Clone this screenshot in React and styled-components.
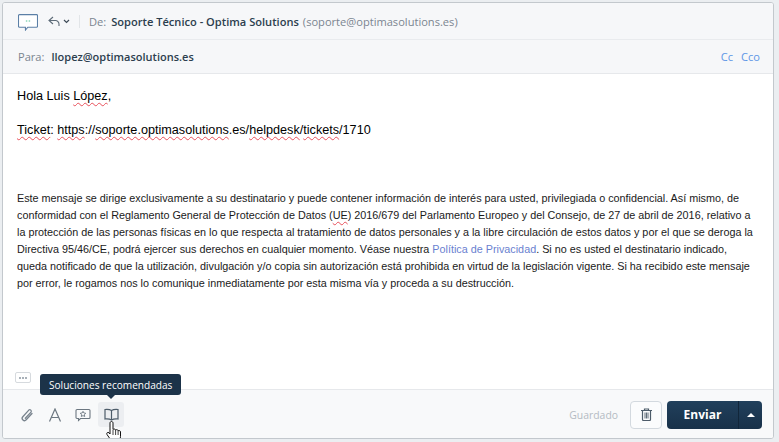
import React from 'react';
import styled, { createGlobalStyle } from 'styled-components';

const Global = createGlobalStyle`
  html, body { margin: 0; padding: 0; height: 100%; background: #ebeef1; overflow: hidden; }
  * { box-sizing: border-box; }
`

function App() {
  return (
    <>
      <Global />
      <Page>
        <Card>
          <FromRow>
            <ChatIcon viewBox="0 0 20 17" fill="none">
              <path d="M1.500.6h17a1 1 0 0 1 1 1v10.600a1 1 0 0 1-1 1H9.800L7.500 16l-.1-2.800H1.500a1 1 0 0 1-1-1V1.600a1 1 0 0 1 1-1z" fill="#fff" stroke="#5b7fa6" strokeWidth="1.100" />
              <circle cx="8.600" cy="7" r=".9" fill="#9fdcc4" />
              <circle cx="11.400" cy="7" r=".9" fill="#9fdcc4" />
            </ChatIcon>
            <ReplyIcon viewBox="0 0 12 11" fill="none">
              <path d="M5 1 1 4.500 5 8M1 4.500h6.500a3.500 3.500 0 0 1 3.500 3.500v2" stroke="#5d6b78" strokeWidth="1.100" />
            </ReplyIcon>
            <Caret viewBox="0 0 7 5" fill="none">
              <path d="M1 1l2.500 2.500L6 1" stroke="#3f4c59" strokeWidth="1.200" />
            </Caret>
            <Divider />
            <Label>De:</Label>
            <Sender>Soporte Técnico - Optima Solutions</Sender>
            <SenderMail>(soporte@optimasolutions.es)</SenderMail>
          </FromRow>
          <ToRow>
            <Label>Para:</Label>
            <Recipient>llopez@optimasolutions.es</Recipient>
            <CopyLinks>
              <CopyLink>Cc</CopyLink>
              <CopyLink>Cco</CopyLink>
            </CopyLinks>
          </ToRow>
          <Body>
            <Line>Hola Luis <Typo>López</Typo>,</Line>
            <Line><Typo>Ticket</Typo>: <Typo>https</Typo>://<Typo>soporte.optimasolutions</Typo>.es/<Typo>helpdesk</Typo>/<Typo>tickets</Typo>/1710</Line>
            <Legal>
              Este mensaje se dirige exclusivamente a su destinatario y puede contener información de interés para usted, privilegiada o confidencial. Así mismo, de<br />
              conformidad con el Reglamento General de Protección de Datos (<Typo>UE</Typo>) 2016/679 del Parlamento Europeo y del Consejo, de 27 de abril de 2016, relativo a<br />
              la protección de las personas físicas en lo que respecta al tratamiento de datos personales y a la libre circulación de estos datos y por el que se deroga la<br />
              Directiva 95/46/CE, podrá ejercer sus derechos en cualquier momento. Véase nuestra <PolicyLink>Política de Privacidad</PolicyLink>. Si no es usted el destinatario indicado,<br />
              queda notificado de que la utilización, divulgación y/o copia sin autorización está prohibida en virtud de la legislación vigente. Si ha recibido este mensaje<br />
              por error, le rogamos nos lo comunique inmediatamente por esta misma vía y proceda a su destrucción.
            </Legal>
            <MoreButton><MoreDot /><MoreDot /><MoreDot /></MoreButton>
          </Body>
          <Footer>
            <Tools>
              <Tool>
                <svg width="14" height="16" viewBox="0 0 14 16" fill="none">
                  <path d="M12 6.500 6.200 12.800a2.300 2.300 0 0 1-3.400-3.100l6-6.600a1.500 1.500 0 0 1 2.200 2L5.300 11.300" stroke="#78838d" strokeWidth="1.300" strokeLinecap="round" />
                </svg>
              </Tool>
              <Tool>
                <svg width="14" height="14" viewBox="0 0 14 14" fill="none">
                  <path d="M1.500 13.500 7 1l5.500 12.500M3.300 9.500h7.400" stroke="#6c7781" strokeWidth="1.200" />
                </svg>
              </Tool>
              <Tool>
                <svg width="16" height="14" viewBox="0 0 16 14" fill="none">
                  <path d="M2 1.500h12a1 1 0 0 1 1 1v7a1 1 0 0 1-1 1H5.500L3.500 12.500v-2H2a1 1 0 0 1-1-1v-7a1 1 0 0 1 1-1z" stroke="#6c7781" strokeWidth="1.100" />
                  <path d="m8 3.300.9 1.700 1.900.3-1.400 1.300.3 1.900L8 7.600l-1.700.9.300-1.900-1.400-1.300 1.900-.3z" stroke="#6c7781" strokeWidth=".9" />
                </svg>
              </Tool>
              <Tool $active>
                <svg width="15" height="14" viewBox="0 0 15 14" fill="none">
                  <path d="M7.500 2.500C6 1.500 3.500 1.300 1 1.500v9.500c2.500-.2 5 0 6.500 1 1.500-1 4-1.200 6.500-1V1.500c-2.500-.2-5 0-6.500 1zM7.500 2.500V12" stroke="#4d5c6a" strokeWidth="1.200" />
                </svg>
              </Tool>
              <Tooltip>Soluciones recomendadas</Tooltip>
              <HandCursor viewBox="0 0 17 24">
                <path d="M5.500.5c.9 0 1.500.7 1.500 1.600V8.500c.8-.8 2.300-.6 2.600.5.900-.7 2.300-.4 2.500.7 1-.5 2.400 0 2.400 1.300v4.500c0 1.800-.6 3-1.200 4.200V23H6v-2.500C4.500 18.500 2.700 16 1 13.500c-.9-1.400.8-2.800 2-1.700l1 1.200V2.100C4 1.200 4.600.5 5.500.5z" fill="#fff" stroke="#111" strokeWidth="1" strokeLinejoin="round" />
                <path d="M7 9v5M9.600 9v5M12.100 10v4" stroke="#111" strokeWidth=".8" />
              </HandCursor>
            </Tools>
            <Actions>
              <Saved>Guardado</Saved>
              <TrashButton>
                <svg width="11" height="13" viewBox="0 0 11 13" fill="none">
                  <path d="M0 2.500h11M3.500 2.500V1h4v1.500" stroke="#4d5c6a" strokeWidth="1.200" />
                  <path d="M1.500 3v8.500a1 1 0 0 0 1 1h6a1 1 0 0 0 1-1V3" stroke="#4d5c6a" strokeWidth="1.200" />
                  <path d="M4 4.500v6M5.500 4.500v6M7 4.500v6" stroke="#4d5c6a" strokeWidth=".9" />
                </svg>
              </TrashButton>
              <SendGroup>
                <SendButton>Enviar</SendButton>
                <SendMenu><UpArrow /></SendMenu>
              </SendGroup>
            </Actions>
          </Footer>
        </Card>
      </Page>
    </>
  )
}

const Page = styled.div`
  padding: 2px 5px 3px 2px;
  height: 442px;
  width: 779px;
`
const Card = styled.div`
  height: 437px;
  background: #fff;
  border: 1px solid #c3c8cd;
  border-radius: 3px;
  display: flex;
  flex-direction: column;
  overflow: hidden;
`
const FromRow = styled.div`
  height: 37px;
  flex: none;
  background: #f6f7f9;
  border-bottom: 1px solid #e9ebee;
  display: flex;
  align-items: center;
  padding-left: 15px;
  font-family: "Open Sans", "Noto Sans", sans-serif;
  font-size: 11.1px;
`
const ChatIcon = styled.svg`
  width: 20px;
  height: 17px;
  margin-top: 2px;
`
const ReplyIcon = styled.svg`
  width: 12px;
  height: 11px;
  margin-left: 10px;
`
const Caret = styled.svg`
  width: 7px;
  height: 5px;
  margin-left: 3px;
`
const Divider = styled.span`
  width: 1px;
  height: 13px;
  background: #e2e5e8;
  margin: 0 9px;
`
const Label = styled.span`
  color: #7b8590;
  font-size: 11.1px;
  font-family: "Open Sans", "Noto Sans", sans-serif;
`
const Sender = styled.span`
  color: #2c3e4e;
  font-weight: 600;
  margin-left: 5px;
`
const SenderMail = styled.span`
  color: #7b8590;
  margin-left: 4px;
`
const ToRow = styled.div`
  height: 34px;
  flex: none;
  background: #f6f7f9;
  border-bottom: 1px solid #e6e8eb;
  display: flex;
  align-items: center;
  padding: 0 13px 0 15px;
  font-family: "Open Sans", "Noto Sans", sans-serif;
`
const Recipient = styled.span`
  color: #2c3e4e;
  font-size: 11px;
  font-weight: 600;
  margin-left: 7px;
`
const CopyLinks = styled.div`
  margin-left: auto;
  display: flex;
  gap: 8px;
`
const CopyLink = styled.span`
  color: #5e96e6;
  font-size: 11.1px;
`
const Body = styled.div`
  flex: 1;
  position: relative;
  padding: 14px 15px 0 14px;
  font-family: "Liberation Sans", Arial, sans-serif;
  color: #000;
`
const Line = styled.p`
  margin: 0 0 17px;
  font-size: 12.65px;
  line-height: 17px;
`
const Typo = styled.span`
  text-decoration: underline wavy #e8505a 1px;
  text-underline-offset: 2px;
  text-decoration-skip-ink: none;
`
const Legal = styled.p`
  margin: 51px 0 0;
  font-size: 10.8px;
  line-height: 17px;
  color: #1a1a1a;
  white-space: nowrap;
`
const PolicyLink = styled.span`
  color: #6a7fd0;
`
const MoreButton = styled.div`
  position: absolute;
  left: 12px;
  bottom: 6px;
  width: 16px;
  height: 11px;
  border: 1px solid #d6dade;
  border-radius: 2px;
  display: flex;
  align-items: center;
  justify-content: center;
  gap: 1px;
`
const MoreDot = styled.span`
  width: 2px;
  height: 2px;
  background: #a9b1b9;
`
const Footer = styled.div`
  height: 49px;
  flex: none;
  background: #f8f9fa;
  border-top: 1px solid #e6e8eb;
  display: flex;
  align-items: center;
  justify-content: space-between;
  padding: 1px 11px 0 11px;
`
const Tools = styled.div`
  position: relative;
  display: flex;
  align-items: center;
  gap: 2px;
`
const Tool = styled.span`
  width: 26px;
  height: 25px;
  display: flex;
  align-items: center;
  justify-content: center;
  border-radius: 3px;
  background: ${p => (p.$active ? '#eceef1' : 'transparent')};
`
const Tooltip = styled.div`
  position: absolute;
  left: 26px;
  top: -28px;
  height: 21px;
  padding: 0 9px;
  display: flex;
  align-items: center;
  background: #1c3349;
  color: #fff;
  border-radius: 3px;
  font-family: "Open Sans", "Noto Sans", sans-serif;
  font-size: 10.1px;
  white-space: nowrap;
  &::after {
    content: "";
    position: absolute;
    left: 66px;
    bottom: -4px;
    border-left: 5px solid transparent;
    border-right: 5px solid transparent;
    border-top: 5px solid #1c3349;
  }
`
const HandCursor = styled.svg`
  position: absolute;
  left: 92px;
  top: 19px;
  width: 17px;
  height: 24px;
`
const Actions = styled.div`
  display: flex;
  align-items: center;
`
const Saved = styled.span`
  color: #b4bbc3;
  font-family: "Open Sans", "Noto Sans", sans-serif;
  font-size: 10.4px;
  margin-right: 12px;
`
const TrashButton = styled.button`
  width: 32px;
  height: 28px;
  padding: 0;
  display: flex;
  align-items: center;
  justify-content: center;
  background: #fbfcfd;
  border: 1px solid #d3d9df;
  border-radius: 4px;
  margin-right: 5px;
`
const SendGroup = styled.div`
  display: flex;
  height: 28px;
  border-radius: 4px;
  overflow: hidden;
  background: linear-gradient(#21405c, #183149);
`
const SendButton = styled.div`
  width: 72px;
  display: flex;
  align-items: center;
  justify-content: center;
  color: #fff;
  font-family: "Open Sans", "Noto Sans", sans-serif;
  font-size: 12px;
  font-weight: 700;
  border-right: 1px solid #11263a;
`
const SendMenu = styled.div`
  width: 23px;
  display: flex;
  align-items: center;
  justify-content: center;
`
const UpArrow = styled.span`
  border-left: 4px solid transparent;
  border-right: 4px solid transparent;
  border-bottom: 4px solid #fff;
`

export default App
